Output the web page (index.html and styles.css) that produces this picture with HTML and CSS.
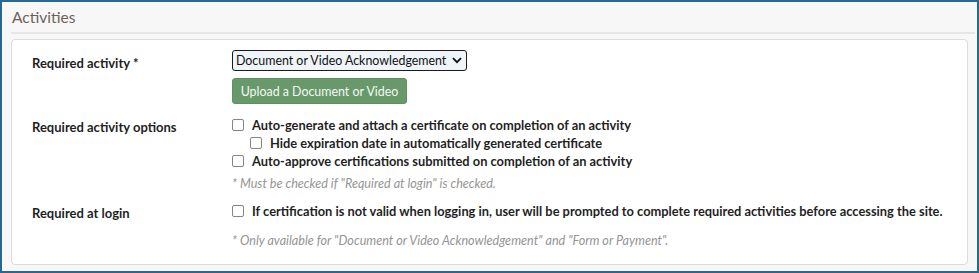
FILE: index.html
```html
<!DOCTYPE html>
<html>
<head>
<meta charset="utf-8">
<link rel="stylesheet" href="styles.css">
</head>
<body>
<div class="panel">
  <div class="panel-title">Activities</div>
  <div class="card">
    <div class="form-row first">
      <div class="label">Required activity *</div>
      <div class="control">
        <div class="select"><span class="select-text">Document or Video Acknowledgement</span>
          <svg class="chev" width="10" height="7" viewBox="0 0 10 7"><path d="M1 1.2 L5 5.2 L9 1.2" fill="none" stroke="#111" stroke-width="1.8"/></svg>
        </div>
        <button class="btn">Upload a Document or Video</button>
      </div>
    </div>
    <div class="form-row second">
      <div class="label">Required activity options</div>
      <div class="control">
        <div class="check"><span class="box"></span>Auto-generate and attach a certificate on completion of an activity</div>
        <div class="check nested"><span class="box"></span>Hide expiration date in automatically generated certificate</div>
        <div class="check"><span class="box"></span>Auto-approve certifications submitted on completion of an activity</div>
        <div class="note">* Must be checked if "Required at login" is checked.</div>
      </div>
    </div>
    <div class="form-row third">
      <div class="label">Required at login</div>
      <div class="control">
        <div class="check"><span class="box"></span>If certification is not valid when logging in, user will be prompted to complete required activities before accessing the site.</div>
        <div class="note spaced">* Only available for "Document or Video Acknowledgement" and "Form or Payment".</div>
      </div>
    </div>
  </div>
</div>
</body>
</html>
```
FILE: styles.css
```css
* { box-sizing: border-box; }
html, body { margin: 0; padding: 0; background: #fff; }
body { font-family: Lato, "Open Sans", sans-serif; color: #222; }
.panel {
  width: 979px;
  height: 273px;
  border: 2px solid #2a678c;
  background: #f7f7f7;
  padding: 0 9px 6px 9px;
  display: flex;
  flex-direction: column;
}
.panel-title {
  font-size: 15.5px;
  color: #6e5f5a;
  height: 32px;
  line-height: 31px;
  border-bottom: 2px solid #e6e6e6;
  margin: 0 -7px 0 0;
  padding-left: 1px;
}
.card {
  margin-top: 5px;
  flex: 1;
  background: #fff;
  border: 1px solid #dcdcdc;
  border-radius: 4px;
  padding: 10px 20px 0 20px;
}
.form-row {
  display: grid;
  grid-template-columns: 200px 1fr;
}
.label {
  font-weight: bold;
  font-size: 13px;
  color: #1f1f1f;
}
.first .label { line-height: 22px; padding-top: 2px; }
.second { margin-top: 12px; }
.second .label { line-height: 22px; }
.third { margin-top: 10px; }
.third .label { line-height: 22px; }
.control { display: flex; flex-direction: column; align-items: flex-start; }
.select {
  width: 235px;
  height: 21px;
  border: 1.5px solid #1a1a1a;
  border-radius: 3px;
  background: #eef4f8;
  padding: 0 6px 0 3px;
  display: flex;
  align-items: center;
  justify-content: space-between;
  color: #111;
}
.select-text {
  font-size: 12.4px;
  line-height: 18px;
  white-space: nowrap;
}
.chev { margin-left: 6px; flex: none; }
.btn {
  margin-top: 7px;
  height: 26px;
  width: 175px;
  background: #68996b;
  border: 1px solid #5f8f62;
  border-radius: 3px;
  color: #f4f8f4;
  font-family: inherit;
  font-size: 12.4px;
  padding: 0;
}
.check {
  font-weight: bold;
  font-size: 12.85px;
  line-height: 18px;
  display: flex;
  align-items: center;
  color: #1f1f1f;
  white-space: nowrap;
}
.check.nested { padding-left: 18px; }
.box {
  width: 12px;
  height: 12px;
  border: 1px solid #858585;
  border-radius: 2px;
  background: #fff;
  margin-right: 8px;
  flex: none;
}
.note {
  font-style: italic;
  font-size: 12.6px;
  color: #959595;
  line-height: 16px;
  margin-top: 6px;
}
.note.spaced { margin-top: 13px; }
```
